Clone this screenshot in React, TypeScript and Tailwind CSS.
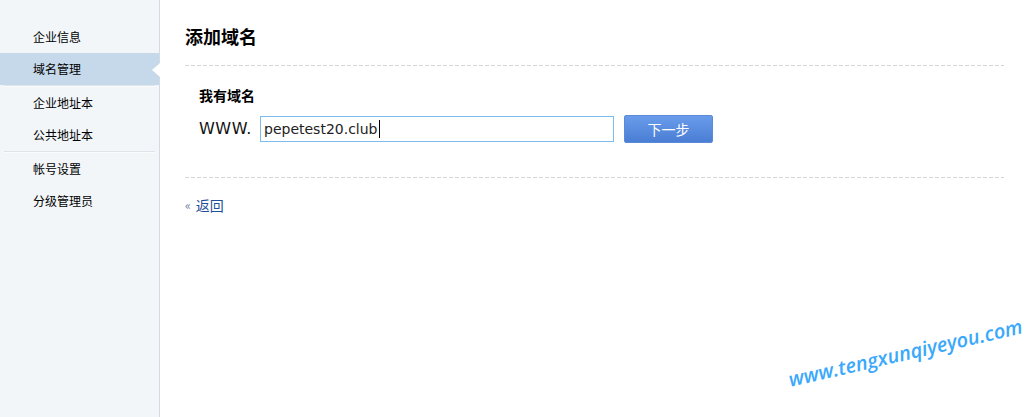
const MENU = [
  { label: "企业信息" },
  { label: "域名管理", active: true, dividerAfter: true },
  { label: "企业地址本" },
  { label: "公共地址本", dividerAfter: true },
  { label: "帐号设置" },
  { label: "分级管理员" },
]

const CJK = "font-['SimSun','Noto_Sans_CJK_SC',sans-serif]"

function Dashed() {
  return (
    <div className="h-px w-full bg-[linear-gradient(to_right,#d4d4d4_4px,transparent_4px)] bg-[length:6px_1px]" />
  )
}

export default function App() {
  return (
    <div className={`relative flex h-[417px] w-full overflow-hidden bg-white text-black ${CJK}`}>
      {/* Sidebar */}
      <aside className="w-[160px] shrink-0 border-r border-[#d3dae1] bg-[#f2f6f9] pt-[21px]">
        {MENU.map((item) => (
          <div key={item.label}>
            <div
              className={`relative flex h-[32px] items-center pl-[33px] text-[12px] ${
                item.active ? "bg-[#c6d9ea]" : ""
              }`}
            >
              {item.label}
              {item.active && (
                <span className="absolute right-[-1px] top-[10px] h-0 w-0 border-y-[7px] border-r-[8px] border-y-transparent border-r-white" />
              )}
            </div>
            {item.dividerAfter && (
              <div className="mx-[4px] h-[2px] border-t border-[#dfe4e9] bg-white/60" />
            )}
          </div>
        ))}
      </aside>

      {/* Main */}
      <main className="flex-1 pl-[25px] pr-[24px] pt-[24px]">
        <h1 className="text-[18px] font-bold leading-[24px]">添加域名</h1>
        <div className="mt-[17px]">
          <Dashed />
        </div>

        <div className="pl-[14px]">
          <h2 className="mt-[19px] text-[14px] font-bold leading-[20px]">我有域名</h2>
          <div className="mt-[10px] flex h-[28px] items-center">
            <span className="w-[61px] font-['DejaVu_Sans',sans-serif] text-[16px] tracking-[0.5px] text-[#111]">WWW.</span>
            <div className="flex h-[26px] w-[354px] items-center border border-[#7dbbec] bg-white pl-[3px] font-['DejaVu_Sans',sans-serif] text-[14px] text-[#222]">
              pepetest20.club
              <span className="ml-px h-[18px] w-px bg-black" />
            </div>
            <button className="ml-[10px] flex h-[28px] w-[89px] items-center justify-center rounded-[2px] border border-[#5a8ad8] bg-[linear-gradient(to_bottom,#6a9ceb,#4a7ed4)] text-[14px] text-white">
              下一步
            </button>
          </div>
        </div>

        <div className="mt-[34px]">
          <Dashed />
        </div>

        <a className="mt-[17px] flex items-center gap-[5px] text-[14px] leading-[20px] text-[#1f4f96]">
          <span className="text-[12px] text-[#6a7fa6]">«</span>
          返回
        </a>
      </main>

      {/* Watermark */}
      <div className="pointer-events-none absolute left-[789px] top-[365px] origin-left -rotate-[13deg] whitespace-nowrap font-['Open_Sans',sans-serif] text-[20px] font-semibold italic text-[#3aa8fb]">
        www.tengxunqiyeyou.com
      </div>
    </div>
  )
}
